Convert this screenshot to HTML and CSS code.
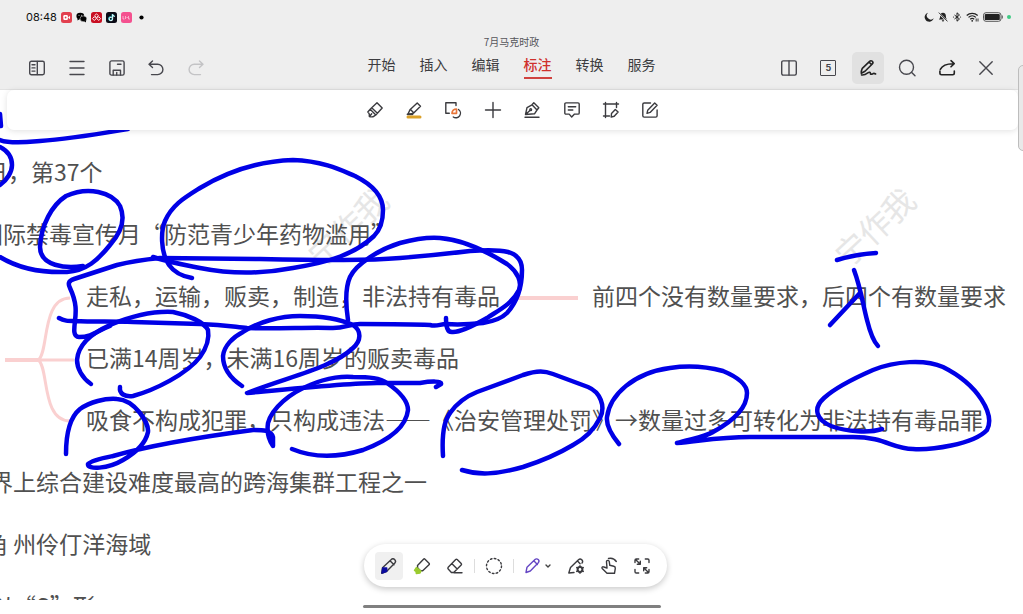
FILE: index.html
```html
<!DOCTYPE html>
<html lang="zh-CN">
<head>
<meta charset="utf-8">
<title>7月马克时政</title>
<link rel="stylesheet" href="styles.css">
</head>
<body>
<div class="app">
  <header class="header">
    <div class="status">
      <div class="status-group">
        <time class="clock">08:48</time>
        <svg class="app-icon" viewBox="0 0 11 11"><rect width="11" height="11" rx="2.5" fill="#e2404f"/><rect x="2.3" y="3" width="4.6" height="5" rx="1.2" fill="#fff"/><path d="M7 5.5 9 3.8v3.4z" fill="#fff"/><circle cx="4.6" cy="5.5" r=".9" fill="#e2404f"/></svg>
        <svg class="app-icon" viewBox="0 0 11 11"><ellipse cx="4.3" cy="4" rx="3.9" ry="3.3"/><path d="m1.5 6 0 2.4L4 7z"/><ellipse cx="7.4" cy="6.8" rx="3.4" ry="2.9" stroke="#eee" stroke-width=".5"/><path d="m8 9 2 1.500-.1-2.500z"/><circle cx="3" cy="3.300" r=".5" fill="#eee"/><circle cx="5.600" cy="3.300" r=".5" fill="#eee"/></svg>
        <svg class="app-icon" viewBox="0 0 11 11"><rect width="11" height="11" rx="2.5" fill="#c90f22"/><g fill="none" stroke="#fff" stroke-width=".9"><path d="m5.500 1.800 1.900 1.900-1.900 1.900-1.900-1.900zM3.300 4.700l1.900 1.900-1.900 1.900-1.900-1.900zM7.700 4.700l1.900 1.900-1.900 1.900-1.900-1.900z"/></g></svg>
        <svg class="app-icon" viewBox="0 0 11 11"><rect width="11" height="11" rx="2.5" fill="#0b0b16"/><path d="M5.300 5.200a1.700 1.700 0 1 0 1 1.600V2.200c.3 1.200 1 1.800 2.300 2" fill="none" stroke="#3fe0e6" stroke-width="1.300"/><path d="M5.700 5.500a1.700 1.700 0 1 0 1 1.600V2.500c.3 1.200 1 1.800 2.100 2" fill="none" stroke="#fff" stroke-width=".9"/></svg>
        <svg class="app-icon" viewBox="0 0 11 11"><rect width="11" height="11" rx="2.5" fill="#f4518f"/><path d="M2 4v3h1.500M4.500 4v3M5.500 5.500h1.300M7.500 4v3H9" fill="none" stroke="#ffd3e3" stroke-width=".7"/></svg>
        <svg class="app-icon" viewBox="0 0 11 11"><circle cx="5.500" cy="5.500" r="2.100"/></svg>
      </div>
      <div class="status-group">
        <svg class="glyph" viewBox="0 0 10 10"><path d="M4 .7A4.600 4.600 0 1 0 9.700 6.300 3.200 3.200 0 0 1 4 .7z"/></svg>
        <svg class="glyph" viewBox="0 0 10 10"><path d="M5 .7c2 0 2.900 1.400 2.900 3.200 0 1.700.3 2.500 1.200 3.700H.9C1.800 6.400 2.100 5.600 2.100 3.900 2.100 2.100 3 .7 5 .7zM3.800 8.200h2.400a1.200 1.200 0 0 1-2.400 0z"/><path d="m.5.8 9 8.700" stroke="#eee" stroke-width="1.800"/><path d="m.8.6 8.700 8.800" stroke="#222" stroke-width=".9"/></svg>
        <svg class="glyph" viewBox="0 0 10 10"><path d="m2.500 3 5 4L5 9.200V.8L7.500 3l-5 4" fill="none" stroke="#222" stroke-width="1"/><circle cx="1.500" cy="5" r=".6"/><circle cx="8.500" cy="5" r=".6"/></svg>
        <svg class="glyph wifi" viewBox="0 0 13 10"><g fill="none" stroke="#222" stroke-width="1.200"><path d="M.7 3.500a8 8 0 0 1 11 0"/><path d="M2.500 5.400a5.400 5.400 0 0 1 7.400 0"/><path d="M4.200 7.200a3 3 0 0 1 4 0"/></g><circle cx="6.200" cy="8.800" r=".9"/><path d="M10.200 6.500v3M12 6.500v3" stroke="#222" stroke-width=".9"/></svg>
        <svg class="glyph battery" viewBox="0 0 20 10"><rect x=".5" y=".7" width="17.500" height="8.600" rx="2.500" fill="none" stroke="#555"/><rect x="1.700" y="1.900" width="15.100" height="6.200" rx="1.200"/><path d="M19.300 3.500v3" stroke="#555"/></svg>
        <span class="live-dot"></span>
      </div>
    </div>
    <div class="nav">
      <div class="nav-left">
        <button class="icon-btn" aria-label="侧栏"><svg viewBox="0 0 16 16"><rect x=".7" y="1.300" width="14.600" height="13.400" rx="1.700"/><path d="M8.300 1.500v13M3 4.700h3M3 7.900h3M3 11.100h3"/></svg></button>
        <button class="icon-btn" aria-label="目录"><svg viewBox="0 0 16 16"><path d="M1 1.500h14M1 8h14M1 14.500h14"/></svg></button>
        <button class="icon-btn" aria-label="保存"><svg viewBox="0 0 16 16"><rect x=".9" y=".9" width="14.200" height="14.200" rx="1.700"/><path d="M4.200 15v-4.800h7.300V15M8.500 4.300H12"/><path d="M7.700 12.500V15"/></svg></button>
        <button class="icon-btn" aria-label="撤销"><svg viewBox="0 0 16 16"><path d="M4.500 1 1 4.200l3.500 3.300M1.300 4.200h8.400a5.200 5.200 0 0 1 0 10.400H3.500"/></svg></button>
        <button class="icon-btn off" aria-label="重做" disabled><svg viewBox="0 0 16 16"><path d="M11.500 1 15 4.200l-3.500 3.300M14.700 4.200H6.300a5.200 5.200 0 0 0 0 10.400h6.200"/></svg></button>
      </div>
      <div class="nav-center">
        <h1 class="doc-title">7月马克时政</h1>
        <nav class="tabs">
          <button class="tab">开始</button>
          <button class="tab">插入</button>
          <button class="tab">编辑</button>
          <button class="tab active">标注</button>
          <button class="tab">转换</button>
          <button class="tab">服务</button>
        </nav>
      </div>
      <div class="nav-right">
        <button class="icon-btn" aria-label="分栏"><svg viewBox="0 0 16 16"><rect x=".7" y=".9" width="14.600" height="14.200" rx="1.500"/><path d="M8 1v14"/></svg></button>
        <button class="icon-btn" aria-label="页面"><span class="page-count">5</span></button>
        <button class="icon-btn selected" aria-label="手写"><svg class="strong" viewBox="0 0 16 16"><path d="m1.300 11.200 1-2.900 7.300-7a1.900 1.900 0 0 1 2.700 2.700L5 11.200 1.300 13.300zM9 2l2.600 2.600M1.500 14.900c3 .4 4.700-.8 6.300-2 1.700-1.200 2.700-.5 2.600.6 0 1.300 1.300.8 2.400.2 1-.6 1.900-.3 2.800.3"/></svg></button>
        <button class="icon-btn" aria-label="搜索"><svg viewBox="0 0 16 16"><circle cx="7.500" cy="7.300" r="7"/><path d="m12.700 12.500 3.300 3.300"/></svg></button>
        <button class="icon-btn" aria-label="分享"><svg class="strong" viewBox="0 0 16 16"><path d="M.9 11v2c0 1.200.6 1.700 1.700 1.700h11c1.100 0 1.700-.5 1.700-1.700v-2M1.300 9.300C3.500 5 7.500 3.500 15 3.700M12 .7l3.200 3-3.200 3.100"/></svg></button>
        <button class="icon-btn" aria-label="关闭"><svg viewBox="0 0 16 16"><path d="m1.800 1.800 12.400 12.400M14.200 1.800 1.800 14.200"/></svg></button>
      </div>
    </div>
  </header>

  <main class="stage">
    <div class="tools" role="toolbar" aria-label="标注">
      <div class="tools-inner">
        <button class="tool" aria-label="荧光笔"><svg viewBox="0 0 16 16"><path d="M10 .8 15.200 6l-4.800 5.300L4.700 5.800zM4.700 5.800l-1.500 1.400 5.600 5.700 1.600-1.600M3.200 7.200.8 10c1.400 1 2 2 1.500 4.500 2 .5 3.700.4 4.400-.1l2.100-1.500M2.500 14.500l2.200-2.800"/></svg></button>
        <button class="tool" aria-label="高亮"><svg viewBox="0 0 16 16"><path d="M1.500 12.300h5" stroke-width="1.800"/><path d="m2 12 2.200-4.600L11.200.900l3.300 3.300-6.800 6.900L4.500 12zM4.500 7.500l3.200 3.300"/><path d="M2 15h12" stroke="#dba129" stroke-width="3"/></svg></button>
        <button class="tool" aria-label="图形"><svg viewBox="0 0 16 16"><path d="M11 3.500V.8H.8v10.500h3.500M13.500 7.500a4 4 0 1 1-5.200 7.500"/><path d="M11.500 7v4.300H7c0-2.500 2-4.300 4.500-4.300z" stroke="#e87539" stroke-width="1.700"/></svg></button>
        <button class="tool" aria-label="添加"><svg viewBox="0 0 16 16"><path d="M.5 8h15M8 .5v15"/></svg></button>
        <button class="tool" aria-label="钢笔"><svg viewBox="0 0 16 16"><path d="M1 15.300h14M1.500 12.500 3 5.600l5-2.800 5 5.200-2.500 3.800zM8 2.800 9.800.7l5 5-1.800 2.300M2 12l3.900-3.600"/><circle cx="6.700" cy="7.700" r=".9"/></svg></button>
        <button class="tool" aria-label="批注"><svg viewBox="0 0 16 16"><path d="M2 .9h12c.8 0 1.200.5 1.200 1.200v8.800c0 .8-.4 1.200-1.200 1.200h-3.500L7.700 15l-2.500-2.900H2c-.8 0-1.200-.4-1.200-1.200V2.100C.8 1.400 1.200.9 2 .9zM4.300 4.700h7.400M4.300 8h4.500"/></svg></button>
        <button class="tool" aria-label="选区"><svg viewBox="0 0 16 16"><path d="M.5 2h15M2.500.5v15M.5 14h6M13.500.5v5"/><path d="m8.500 11.500 3.800-4 2.800 2.500-3.900 4.300-3 .7z"/></svg></button>
        <button class="tool" aria-label="编辑批注"><svg viewBox="0 0 16 16"><path d="M8.500 1H2.200C1.300 1 .8 1.400.8 2.300v11.500c0 .8.500 1.300 1.400 1.300h11.500c.9 0 1.400-.5 1.400-1.300V8M5 11.300l.7-3L12.700 1l2.400 2.200-7 7.200z"/></svg></button>
      </div>
    </div>

    <section class="sheet">
      <svg class="under" viewBox="0 90 1023 524" aria-hidden="true">
        <text class="watermark" transform="translate(848 269) rotate(-43)">宁作我</text>
        <text class="watermark" transform="translate(321 269) rotate(-43)">宁作我</text>
        <g class="branch">
          <path class="thick" d="M5 360h35M517 298h61"/>
          <path d="M38 360h36M38 360c11-6 3-62 32-62M38 360c11 6 3 61 32 61"/>
        </g>
      </svg>
      <div class="outline">
        <p class="row bleed-s">日，第37个</p>
        <p class="row bleed-m">国际禁毒宣传月“防范青少年药物滥用”</p>
        <p class="row indent"><span>走私，运输，贩卖，制造，非法持有毒品</span><span>前四个没有数量要求，后四个有数量要求</span></p>
        <p class="row indent">已满14周岁，未满16周岁的贩卖毒品</p>
        <p class="row indent">吸食不构成犯罪，只构成违法——《治安管理处罚》→数量过多可转化为非法持有毒品罪</p>
        <p class="row bleed">界上综合建设难度最高的跨海集群工程之一</p>
        <p class="row bleed-s">角 州伶仃洋海域</p>
        <p class="row bleed cut">以“S”形</p>
      </div>
      <svg class="ink" viewBox="0 90 1023 524" aria-hidden="true">
        <path d="M0 114 1 126"/>
        <path d="M0 140C10 144 28 142 40 141 70 139 98 134 128 129"/>
        <path d="M0 147C8 151 12 158 12 165S7 180 0 185"/>
        <path d="M83 266C66 269 40 266 40 247 41 225 52 205 66 196 88 186 112 192 120 206 127 222 119 235 110 245 98 260 86 271 67 272 40 273 18 268 0 257"/>
        <path d="M192 278C180 276 174 272 169 265 160 252 161 230 165 221 172 205 184 198 200 188 230 170 262 161 293 160 325 161 345 172 355 176 375 186 383 198 383 210 383 222 380 230 374 236 355 254 330 262 293 268 262 274 230 274 200 268 185 265 168 262 153 257"/>
        <path d="M59 318C64 321 68 321 75 321 95 322 113 321 133 322L200 324C225 325 235 327 247 328 280 329 310 327 333 328 345 328 350 324 360 324 390 324 410 324 430 325 437 327 440 324 446 324 460 325 473 324 483 323 496 321 503 317 507 313 517 302 522 287 522 270 522 258 515 254 508 252 500 250 485 250 470 251 445 254 425 256 400 258 365 261 320 260 260 259L160 258C140 260 125 263 117 265L74 279C68 281 68 284 70 288 77 303 76 312 75 321 74 329 73 337 79 337 92 337 97 331 110 326"/>
        <path d="M91 384C82 378 77 368 77 360 78 346 90 334 110 325 132 316 155 311 173 312 188 315 204 322 208 330 210 341 205 350 200 357 187 374 155 390 133 396 125 397 119 394 120 387"/>
        <path d="M348 320C345 300 346 286 350 277 356 264 380 249 400 243 415 239 428 237 440 238 464 240 488 252 507 264 518 272 522 282 519 290 512 304 499 310 487 318 473 326 460 332 453 332 447 333 446 326 446 318"/>
        <path d="M242 386C230 378 223 367 223 356 224 346 233 337 243 332 258 322 280 316 300 316 320 316 340 319 353 325 362 331 361 341 353 348 332 368 290 376 247 393 290 389 350 383 377 383L420 383C432 381 442 381 441 384L436 387"/>
        <path d="M66 454C66 435 69 418 80 409 90 402 105 398 117 399 135 400 149 423 148 432 145 446 130 456 123 460 108 469 87 470 88 464 92 460 103 458 113 456 155 444 215 435 253 430 263 430 271 430 273 437V446C268 439 267 430 268 423 272 408 290 393 310 385 328 377 345 376 353 377 370 377 380 378 387 383 400 392 408 401 408 410 406 428 387 441 363 450 340 457 316 459 292 449"/>
        <path d="M443 456C442 440 443 422 450 413 457 403 467 396 477 392L523 375C538 370 545 371 553 374L588 387C600 392 606 406 600 418 594 430 586 438 573 445 558 454 545 460 523 467 495 475 478 475 462 470"/>
        <path d="M619 444C610 433 606 425 607 417 610 395 633 373 670 368 690 365 708 367 723 371 735 376 747 383 747 393 747 405 737 419 713 432 705 437 690 439 677 443 700 441 720 437 750 437L853 437C885 437 893 449 913 449 930 450 973 445 987 430 995 415 979 385 943 367 925 359 895 361 873 370 857 377 836 387 824 398 812 409 817 420 831 426 847 432 870 433 882 429"/>
        <path d="M837 260Q857 254 876 253"/>
        <path d="M854 270C861 289 863 305 867 320 871 336 874 342 878 346M860 293 830 325"/>
      </svg>
    </section>
  </main>

  <div class="pen-bar" role="toolbar" aria-label="画笔">
    <button class="pen selected" aria-label="画笔"><svg viewBox="0 0 16 16"><path d="m1.500 9.700 8.800-8.300c1-1 2.400-.7 3.300.2 1 1 1.300 2.300.3 3.300L5.500 13.500.7 15.300zM9 2.700l4 4"/><path d="M1.700 10 1 15l4.700-1.600V10z" fill="#0b0ba0" stroke="#0b0ba0"/></svg></button>
    <button class="pen" aria-label="荧光笔"><svg viewBox="0 0 16 16"><path d="m3.500 7.500 6-6.300c.5-.5 1-.5 1.500 0l4 4c.5.500.5 1 0 1.500l-6.300 6.100-2.500-.3-2.500-2.500z"/><path d="M2.500 9.500.5 12.500l1.500 1 .3 2 3.700-.5 1-2z" fill="#9acb2e" stroke="#9acb2e"/></svg></button>
    <button class="pen" aria-label="橡皮"><svg viewBox="0 0 16 16"><path d="m1.200 9.200 7.500-7.600c.5-.5 1-.5 1.500 0l4 4c.5.500.5 1 0 1.500l-7.500 7.400H4.400l-3.200-3.400c-.5-.6-.5-1.300 0-1.900zM5 5.800l5.200 5.200M7 14.700h8"/></svg></button>
    <span class="divider"></span>
    <button class="pen" aria-label="套索"><svg viewBox="0 0 16 16"><circle cx="8" cy="8" r="7.500" stroke-dasharray="1.600 2.330"/></svg></button>
    <span class="divider"></span>
    <button class="pen color" aria-label="笔色"><svg viewBox="0 0 16 16"><path d="m2 9.200 8-7.700c1-1 2.300-.8 3.200.1 1 1 1 2.200.1 3.200L5.300 13 1 14.500zM8.800 2.800l3.600 3.600"/></svg><svg class="chevron" viewBox="0 0 6 6"><path d="m1 2 2 2 2-2"/></svg></button>
    <button class="pen" aria-label="画笔设置"><svg viewBox="0 0 16 16"><path d="M6 14.500.8 15l1.700-5.500 8-7.800c1-1 2.400-.8 3.300.1 1 1 1 2.300.2 3.300M9.300 2.800l2.800 3"/><circle cx="12" cy="11.500" r="2.400" stroke-width="2"/><path d="M12 7.700v1.500M12 13.800v1.500M8.700 9.600l1.300.8M14 12.600l1.300.8M15.300 9.600l-1.300.8M10 12.600l-1.300.8"/></svg></button>
    <button class="pen" aria-label="手势"><svg viewBox="0 0 16 16"><path d="m6 10-.5-6c-.2-2 2.700-2.200 2.800-.2l.5 3.500 4 .9c1.200.3 1.700 1 1.500 2.200l-.8 4.900H6L1.200 10.500c-.8-1 .5-2.300 1.600-1.500zM7.500.5c3.500-.8 6 .3 7.800 3"/></svg></button>
    <button class="pen" aria-label="全屏"><svg viewBox="0 0 16 16"><path d="M1 4.500V2.300C1 1.400 1.400 1 2.300 1h2.400M11.300 1h2.400c.9 0 1.300.4 1.300 1.300v2.200M1 11.500v2.200c0 .9.400 1.300 1.300 1.300h2.400M11.300 15h2.400c.9 0 1.300-.4 1.300-1.300v-2.200M1.500 1.500l4.300 4.300M10.200 10.200l4.300 4.300M6.300 3.300v3h-3M9.700 12.700v-3h3"/></svg></button>
  </div>
  <span class="side-handle"></span>
  <span class="home-bar"></span>
</div>
</body>
</html>
```
FILE: styles.css
```css
* { box-sizing: border-box; }

body {
  margin: 0;
  font-family: "Noto Sans CJK SC", sans-serif;
  color: #3c3c40;
  background: #fff;
}

.app {
  position: relative;
  display: flex;
  flex-direction: column;
  height: 100vh;
  overflow: hidden;
}

button {
  display: flex;
  align-items: center;
  justify-content: center;
  border: 0;
  padding: 0;
  background: none;
  font: inherit;
  color: inherit;
}

button svg {
  flex: none;
  width: 16px;
  height: 16px;
  fill: none;
  stroke: currentColor;
  stroke-width: 1.4;
  stroke-linecap: round;
  stroke-linejoin: round;
  overflow: visible;
}

button .strong { stroke-width: 1.6; color: #222; }

.header {
  flex: none;
  background: #eee;
  border-bottom: 1px solid #e2e2e2;
}

.status {
  display: flex;
  justify-content: space-between;
  height: 34px;
  padding: 0 12px 0 26px;
}

.status-group {
  display: flex;
  align-items: center;
  gap: 4px;
}

.clock {
  font: 11px Inter, sans-serif;
  color: #111;
}

.app-icon { width: 11px; height: 11px; }

.glyph { width: 10px; height: 10px; fill: #222; }
.wifi { width: 13px; }
.battery { width: 20px; }

.live-dot {
  width: 4px;
  height: 4px;
  border-radius: 50%;
  background: #3fca84;
}

.nav {
  display: grid;
  grid-template-columns: 1fr auto 1fr;
  height: 55px;
}

.nav-left,
.nav-right {
  display: flex;
  justify-content: space-between;
  align-items: center;
  align-self: start;
  height: 68px;
}

.nav-left { width: 191px; margin-left: 21px; }
.nav-right { width: 229px; margin-right: 21px; justify-self: end; }

.icon-btn {
  width: 32px;
  height: 32px;
  border-radius: 5px;
  color: #47474d;
}

.icon-btn.off { color: #c3c3c5; }
.icon-btn.selected { background: #e1e1e1; }

.page-count {
  width: 16px;
  height: 16px;
  border: 1px solid #47474d;
  border-radius: 1px;
  font: bold 9px/14px Inter, sans-serif;
  text-align: center;
}

.doc-title {
  margin: 0;
  font-size: 10px;
  line-height: 16px;
  font-weight: 400;
  text-align: center;
  color: #55555a;
}

.tabs {
  display: flex;
  gap: 24px;
}

.tab {
  height: 29px;
  border-bottom: 2px solid transparent;
  font-size: 14px;
  line-height: 28px;
}

.tab.active {
  border-color: #d0433f;
  color: #cf302c;
  font-weight: 500;
}

.stage {
  flex: 1;
  position: relative;
  min-height: 0;
}

.tools {
  position: relative;
  z-index: 2;
  display: flex;
  justify-content: center;
  margin: 0 5px 0 7px;
  height: 40px;
  border-radius: 7px;
  background: #fff;
  box-shadow: 0 1px 6px #0000001f;
}

.tools-inner {
  display: flex;
  justify-content: space-between;
  align-items: center;
  width: 300px;
}

.tool {
  width: 24px;
  height: 24px;
  color: #3b3b3f;
}

.sheet {
  position: absolute;
  inset: 0;
  overflow: hidden;
}

.under,
.ink {
  position: absolute;
  top: 0;
  left: 0;
  width: 1023px;
  height: 524px;
}

.watermark {
  font-size: 32px;
  fill: #e6e6e6;
}

.branch {
  fill: none;
  stroke: #fad0d0;
  stroke-width: 3;
}

.branch .thick { stroke-width: 4; }

.ink {
  fill: none;
  stroke: #0000e6;
  stroke-width: 4.5;
  stroke-linecap: round;
  stroke-linejoin: round;
}

.outline {
  position: relative;
  padding-top: 50px;
}

.row {
  display: flex;
  gap: 92px;
  margin: 0;
  height: 62px;
  font-size: 23px;
  line-height: 62px;
  font-weight: 400;
  white-space: pre;
  color: #505050;
}

.indent { padding-left: 86px; }
.bleed { margin-left: -10px; }
.bleed-s { margin-left: -15px; }
.bleed-m { margin-left: -20px; }
.cut { height: 26px; overflow: hidden; }

.pen-bar {
  position: absolute;
  z-index: 3;
  bottom: 27px;
  left: calc(50% - 148px);
  display: flex;
  align-items: center;
  gap: 5px;
  height: 43px;
  padding: 0 11px;
  border-radius: 22px;
  background: #fff;
  box-shadow: 0 2px 6px #00000038;
}

.pen {
  width: 28px;
  height: 28px;
  border-radius: 4px;
  color: #3b3b3f;
}

.pen.selected { background: #f0f0f0; }

.pen.color {
  width: 38px;
  gap: 4px;
  color: #6547c4;
}

.pen .chevron {
  width: 6px;
  height: 6px;
  stroke: #444;
}

.divider {
  width: 1px;
  height: 14px;
  background: #ddd;
}

.side-handle {
  position: absolute;
  z-index: 4;
  top: 65px;
  right: -6px;
  width: 11px;
  height: 86px;
  border: 1px solid #bdbdbd;
  border-radius: 5px;
  background: #e9e9e9;
}

.home-bar {
  position: absolute;
  z-index: 4;
  bottom: 6px;
  left: calc(50% - 149px);
  width: 298px;
  height: 3px;
  border-radius: 2px;
  background: #808080;
}
```
